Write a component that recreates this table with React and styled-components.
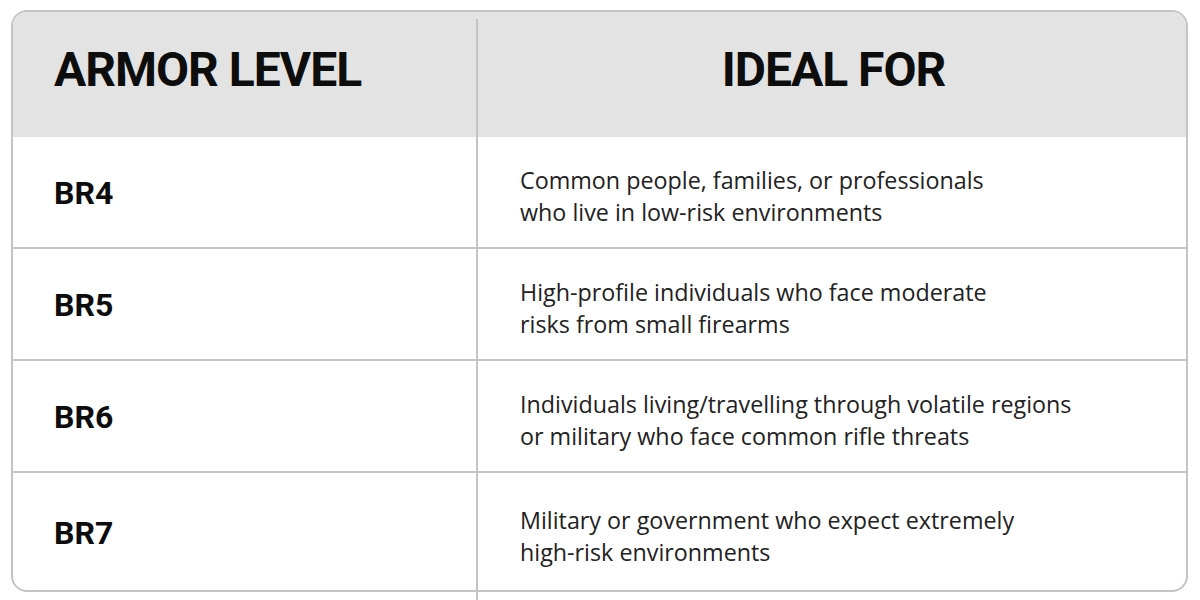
import styled, { createGlobalStyle } from 'styled-components';

const GlobalStyle = createGlobalStyle`
  html, body {
    margin: 0;
    padding: 0;
    background: #ffffff;
    overflow: hidden;
  }
`

const Page = styled.div`
  width: 1200px;
  height: 600px;
  box-sizing: border-box;
  padding: 10px 12px 0 11px;
`

const Card = styled.div`
  position: relative;
  border: 2px solid #c4c4c6;
  border-radius: 16px;
  display: grid;
  grid-template-columns: 464px 1fr;

  /* column divider runs past the card bottom */
  &::before {
    content: '';
    position: absolute;
    left: 463px;
    top: 7px;
    bottom: -20px;
    width: 2px;
    background: #c4c4c6;
  }
`

const HeadCell = styled.div`
  height: 125px;
  box-sizing: border-box;
  background: #e3e3e3;
  display: flex;
  align-items: center;
  justify-content: ${p => (p.center ? 'center' : 'flex-start')};
  padding: 0 0 10px ${p => (p.center ? '4px' : '41px')};
  border-radius: ${p => (p.center ? '0 14px 0 0' : '14px 0 0 0')};
  font-family: Roboto, 'DejaVu Sans Condensed', sans-serif;
  font-weight: 700;
  font-size: 48px;
  letter-spacing: -1px;
  color: #0d0d0d;
`

const Level = styled.div`
  height: ${p => (p.last ? '117px' : '112px')};
  box-sizing: border-box;
  border-bottom: ${p => (p.last ? 'none' : '2px solid #c4c4c6')};
  display: flex;
  align-items: center;
  padding: 2px 0 0 41px;
  font-family: Roboto, 'DejaVu Sans Condensed', sans-serif;
  font-weight: 700;
  font-size: 32px;
  color: #0d0d0d;
`

const Desc = styled.div`
  height: ${p => (p.last ? '117px' : '112px')};
  box-sizing: border-box;
  border-bottom: ${p => (p.last ? 'none' : '2px solid #c4c4c6')};
  display: flex;
  align-items: center;
  padding: 8px 0 0 43px;
  font-family: 'Open Sans', sans-serif;
  font-weight: 400;
  font-size: 23.3px;
  line-height: 32px;
  color: #222222;
`

const rows = [
  { level: 'BR4', text: ['Common people, families, or professionals', 'who live in low-risk environments'] },
  { level: 'BR5', text: ['High-profile individuals who face moderate', 'risks from small firearms'] },
  { level: 'BR6', text: ['Individuals living/travelling through volatile regions', 'or military who face common rifle threats'] },
  { level: 'BR7', text: ['Military or government who expect extremely', 'high-risk environments'] },
]

export default function App() {
  return (
    <Page>
      <GlobalStyle />
      <Card>
        <HeadCell>ARMOR LEVEL</HeadCell>
        <HeadCell center>IDEAL FOR</HeadCell>
        {rows.map((r, i) => {
          const last = i === rows.length - 1
          return [
            <Level key={r.level} last={last}>{r.level}</Level>,
            <Desc key={r.level + '-d'} last={last}>
              <div>{r.text[0]}<br />{r.text[1]}</div>
            </Desc>,
          ]
        })}
      </Card>
    </Page>
  );
}
